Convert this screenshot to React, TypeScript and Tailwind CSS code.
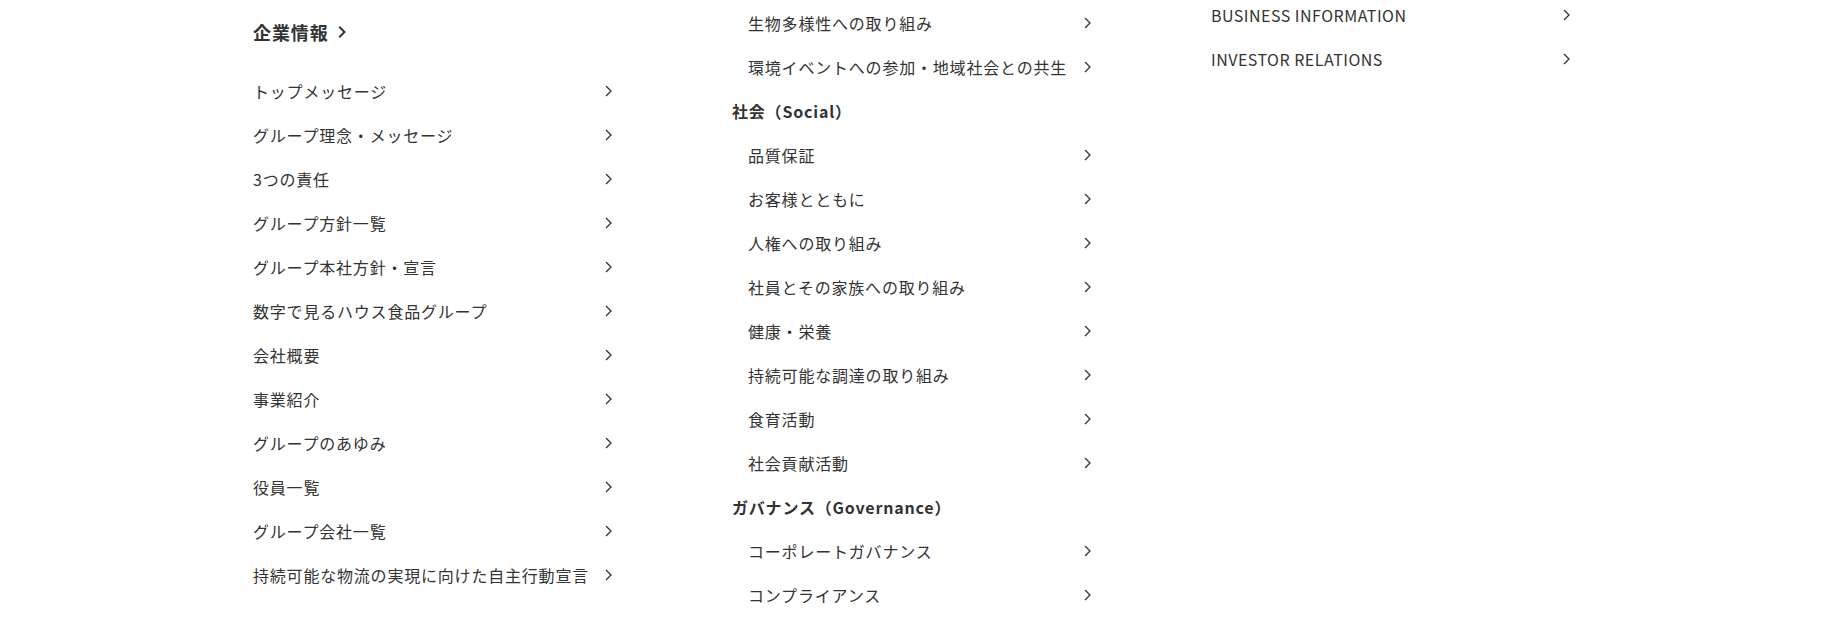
import React, { FC } from "react";

type Entry = { label: string; heading?: boolean; sub?: boolean };

const Chevron: FC<{ bold?: boolean }> = ({ bold }) => (
  <svg
    width={bold ? 9 : 8}
    height={12}
    viewBox="0 0 8 12"
    fill="none"
    stroke="#333"
    strokeWidth={bold ? 2 : 1.3}
    strokeLinecap="square"
  >
    <path d="M1.5 1.5 L6 6 L1.5 10.5" />
  </svg>
);

const company: string[] = [
  "トップメッセージ",
  "グループ理念・メッセージ",
  "3つの責任",
  "グループ方針一覧",
  "グループ本社方針・宣言",
  "数字で見るハウス食品グループ",
  "会社概要",
  "事業紹介",
  "グループのあゆみ",
  "役員一覧",
  "グループ会社一覧",
  "持続可能な物流の実現に向けた自主行動宣言",
];

const sustainability: Entry[] = [
  { label: "生物多様性への取り組み", sub: true },
  { label: "環境イベントへの参加・地域社会との共生", sub: true },
  { label: "社会（Social）", heading: true },
  { label: "品質保証", sub: true },
  { label: "お客様とともに", sub: true },
  { label: "人権への取り組み", sub: true },
  { label: "社員とその家族への取り組み", sub: true },
  { label: "健康・栄養", sub: true },
  { label: "持続可能な調達の取り組み", sub: true },
  { label: "食育活動", sub: true },
  { label: "社会貢献活動", sub: true },
  { label: "ガバナンス（Governance）", heading: true },
  { label: "コーポレートガバナンス", sub: true },
  { label: "コンプライアンス", sub: true },
];

const others: string[] = ["BUSINESS INFORMATION", "INVESTOR RELATIONS"];

const Row: FC<{ label: string; indent?: boolean; latin?: boolean }> = ({ label, indent, latin }) => (
  <li className={`flex h-[44px] items-center justify-between ${indent ? "pl-[16px]" : ""}`}>
    <a
      href="#"
      className={`text-[16px] text-[#333] ${latin ? "tracking-[0.03em]" : "tracking-[0.05em]"}`}
    >
      {label}
    </a>
    <span className="pr-[1px]">
      <Chevron />
    </span>
  </li>
);

const App: FC = () => {
  return (
    <div
      className="h-[629px] w-full overflow-hidden bg-white text-[#333]"
      style={{ fontFamily: '"Noto Sans CJK JP", "Noto Sans", sans-serif' }}
    >
      <div className="ml-[253px] grid grid-cols-[361px_361px_361px] gap-x-[118px]">
        <div className="pt-[19px]">
          <a href="#" className="flex h-[26px] items-center gap-[9px] text-[18px] font-bold tracking-[0.05em]">
            企業情報
            <Chevron bold />
          </a>
          <ul className="mt-[24px]">
            {company.map((c) => (
              <Row key={c} label={c} />
            ))}
          </ul>
        </div>

        <div className="pt-[1px]">
          <ul>
            {sustainability.map((e) =>
              e.heading ? (
                <li key={e.label} className="flex h-[44px] items-center text-[16px] font-bold tracking-[0.05em]">
                  {e.label}
                </li>
              ) : (
                <Row key={e.label} label={e.label} indent />
              )
            )}
          </ul>
        </div>

        <div className="-mt-[7px]">
          <ul>
            {others.map((o) => (
              <Row key={o} label={o} latin />
            ))}
          </ul>
        </div>
      </div>
    </div>
  );
};

export default App;
